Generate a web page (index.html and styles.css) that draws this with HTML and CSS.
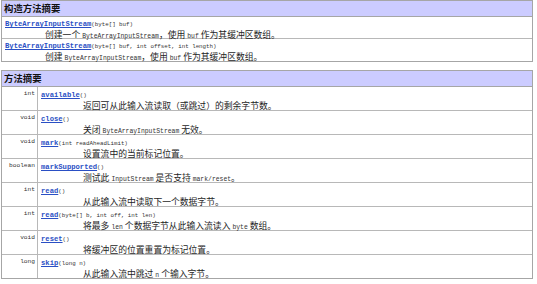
FILE: index.html
```html
<!DOCTYPE html>
<html lang="zh">
<head>
<meta charset="utf-8">
<title>ByteArrayInputStream</title>
<link rel="stylesheet" href="styles.css">
</head>
<body>
<section class="summary ctor">
  <div class="summary-head">构造方法摘要</div>
  <div class="ctor-row">
    <div class="sig"><a class="name" href="#">ByteArrayInputStream</a><span class="args">(byte[]&nbsp;buf)</span></div>
    <div class="desc">创建一个 <code>ByteArrayInputStream</code>，使用 <code>buf</code> 作为其缓冲区数组。</div>
  </div>
  <div class="ctor-row">
    <div class="sig"><a class="name" href="#">ByteArrayInputStream</a><span class="args">(byte[]&nbsp;buf, int&nbsp;offset, int&nbsp;length)</span></div>
    <div class="desc">创建 <code>ByteArrayInputStream</code>，使用 <code>buf</code> 作为其缓冲区数组。</div>
  </div>
</section>

<section class="summary methods">
  <div class="summary-head">方法摘要</div>
  <div class="m-row">
    <div class="type">int</div>
    <div class="body">
      <div class="sig"><a class="name" href="#">available</a><span class="args">()</span></div>
      <div class="desc">返回可从此输入流读取（或跳过）的剩余字节数。</div>
    </div>
  </div>
  <div class="m-row">
    <div class="type">void</div>
    <div class="body">
      <div class="sig"><a class="name" href="#">close</a><span class="args">()</span></div>
      <div class="desc">关闭 <code>ByteArrayInputStream</code> 无效。</div>
    </div>
  </div>
  <div class="m-row">
    <div class="type">void</div>
    <div class="body">
      <div class="sig"><a class="name" href="#">mark</a><span class="args">(int&nbsp;readAheadLimit)</span></div>
      <div class="desc">设置流中的当前标记位置。</div>
    </div>
  </div>
  <div class="m-row">
    <div class="type">boolean</div>
    <div class="body">
      <div class="sig"><a class="name" href="#">markSupported</a><span class="args">()</span></div>
      <div class="desc">测试此 <code>InputStream</code> 是否支持 <code>mark/reset</code>。</div>
    </div>
  </div>
  <div class="m-row">
    <div class="type">int</div>
    <div class="body">
      <div class="sig"><a class="name" href="#">read</a><span class="args">()</span></div>
      <div class="desc">从此输入流中读取下一个数据字节。</div>
    </div>
  </div>
  <div class="m-row">
    <div class="type">int</div>
    <div class="body">
      <div class="sig"><a class="name" href="#">read</a><span class="args">(byte[]&nbsp;b, int&nbsp;off, int&nbsp;len)</span></div>
      <div class="desc">将最多 <code>len</code> 个数据字节从此输入流读入 <code>byte</code> 数组。</div>
    </div>
  </div>
  <div class="m-row">
    <div class="type">void</div>
    <div class="body">
      <div class="sig"><a class="name" href="#">reset</a><span class="args">()</span></div>
      <div class="desc">将缓冲区的位置重置为标记位置。</div>
    </div>
  </div>
  <div class="m-row">
    <div class="type">long</div>
    <div class="body">
      <div class="sig"><a class="name" href="#">skip</a><span class="args">(long&nbsp;n)</span></div>
      <div class="desc">从此输入流中跳过 <code>n</code> 个输入字节。</div>
    </div>
  </div>
</section>
</body>
</html>
```
FILE: styles.css
```css
html, body {
  margin: 0;
  padding: 0;
  background: #ffffff;
}

body {
  padding-left: 1px;
  font-family: "Noto Sans CJK SC", "Noto Sans", sans-serif;
  font-size: 8px;
  line-height: 10px;
  color: #1e1e1e;
}

.summary {
  width: 530px;
  border: 1px solid #a6a6a6;
}

.methods {
  margin-top: 8px;
}

.summary-head {
  height: 15px;
  line-height: 15px;
  background: #ccccff;
  border-bottom: 1px solid #a6a6a6;
  padding-left: 2px;
  font-size: 9.4px;
  font-weight: bold;
  color: #111;
}

.ctor-row {
  height: 22px;
  box-sizing: border-box;
  padding: 3px 3px 0 3px;
  border-bottom: 1px solid #b8b8b8;
}

.ctor-row:last-child {
  border-bottom: none;
}

.sig {
  height: 9px;
  font-family: "Liberation Mono", monospace;
  font-size: 6px;
  line-height: 9px;
  white-space: nowrap;
}

.name {
  font-size: 7.2px;
  line-height: 9px;
  font-weight: bold;
  color: #2a4fc4;
  text-decoration: underline;
}

.args {
  font-size: 5.8px;
  line-height: 9px;
  color: #333;
}

.desc {
  height: 11px;
  line-height: 11px;
  padding-left: 40px;
  font-size: 8.8px;
  white-space: nowrap;
  color: #1e1e1e;
}

code {
  font-family: "Liberation Mono", monospace;
  font-size: 6.4px;
  line-height: 11px;
  color: #333;
}

.m-row {
  display: flex;
  height: 23px;
  border-bottom: 1px solid #b8b8b8;
}

.m-row:last-child {
  border-bottom: none;
}

.type {
  flex: 0 0 36px;
  box-sizing: border-box;
  border-right: 1px solid #b8b8b8;
  text-align: right;
  padding: 3px 2px 0 0;
  font-family: "Liberation Mono", monospace;
  font-size: 6.2px;
  line-height: 8px;
  color: #333;
}

.body {
  flex: 1;
  padding: 4px 3px 0 3px;
}

.m-row .desc {
  padding-left: 42px;
}
```
